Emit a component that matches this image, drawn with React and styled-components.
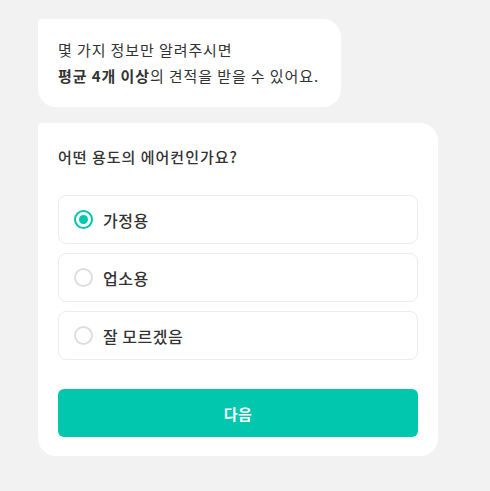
import React, { useState } from "react";
import styled, { createGlobalStyle } from "styled-components";

const GlobalStyle = createGlobalStyle`
  html, body {
    margin: 0;
    padding: 0;
    background: #f2f2f2;
  }
  body {
    font-family: "Noto Sans CJK KR", "Noto Sans", sans-serif;
    color: #333;
  }
`;

const Page = styled.div`
  display: flex;
  flex-direction: column;
  align-items: flex-start;
  gap: 16px;
  padding: 19px 38px;
  min-height: 491px;
  box-sizing: border-box;
`;

const Bubble = styled.div`
  background: #fff;
  border-radius: 4px 18px 18px 18px;
  padding: 18px 22px 18px 20px;
  font-size: 15px;
  line-height: 26px;
  letter-spacing: 0.9px;
  color: #333;

  b {
    font-weight: 700;
  }
`;

const Card = styled.div`
  width: 400px;
  box-sizing: border-box;
  background: #fff;
  border-radius: 4px 18px 18px 18px;
  padding: 23px 20px 19px;
`;

const Title = styled.div`
  font-size: 15px;
  font-weight: 500;
  line-height: 22px;
  letter-spacing: 1px;
  margin-bottom: 27px;
`;

const Options = styled.div`
  display: flex;
  flex-direction: column;
  gap: 9px;
`;

const Option = styled.label`
  display: flex;
  align-items: center;
  gap: 10px;
  height: 49px;
  box-sizing: border-box;
  padding: 0 15px;
  border: 1px solid #ececec;
  border-radius: 8px;
  cursor: pointer;
  font-size: 16px;
  font-weight: 500;
  letter-spacing: 0.5px;
  color: #333;
`;

const Radio = styled.span`
  width: 19px;
  height: 19px;
  box-sizing: border-box;
  border-radius: 50%;
  border: 2px solid ${(p) => (p.checked ? "#00c7ae" : "#dedede")};
  display: flex;
  align-items: center;
  justify-content: center;

  &::after {
    content: "";
    width: 9px;
    height: 9px;
    border-radius: 50%;
    background: #00c7ae;
    display: ${(p) => (p.checked ? "block" : "none")};
  }
`;

const NextButton = styled.button`
  margin-top: 29px;
  width: 100%;
  height: 48px;
  border: none;
  border-radius: 6px;
  background: #00c7ae;
  color: #fff;
  font-family: inherit;
  font-size: 15px;
  font-weight: 700;
  letter-spacing: 0.5px;
  cursor: pointer;
`;

const choices = ["가정용", "업소용", "잘 모르겠음"];

export default function App() {
  const [selected, setSelected] = useState(0);
  return (
    <>
      <GlobalStyle />
      <Page>
        <Bubble>
          몇 가지 정보만 알려주시면
          <br />
          <b>평균 4개 이상</b>의 견적을 받을 수 있어요.
        </Bubble>
        <Card>
          <Title>어떤 용도의 에어컨인가요?</Title>
          <Options>
            {choices.map((c, i) => (
              <Option key={c} onClick={() => setSelected(i)}>
                <Radio checked={selected === i} />
                {c}
              </Option>
            ))}
          </Options>
          <NextButton>다음</NextButton>
        </Card>
      </Page>
    </>
  );
}
